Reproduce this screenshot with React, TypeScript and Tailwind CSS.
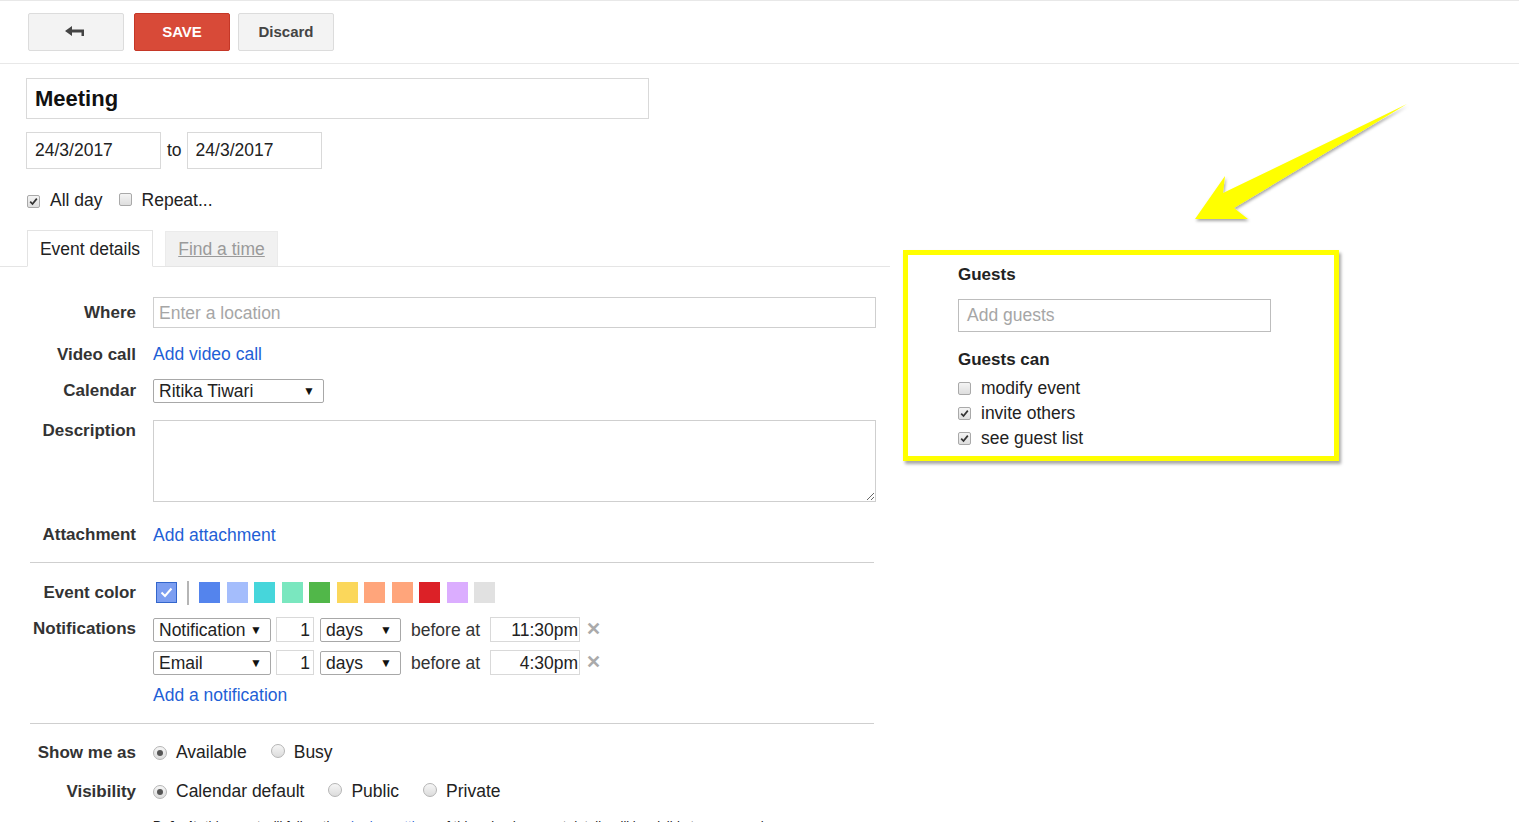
import React from 'react';

const font = { fontFamily: '"Liberation Sans", Arial, sans-serif' };

const Check = ({ checked }: { checked: boolean }) => (
  <span className="inline-flex h-[13px] w-[13px] shrink-0 items-center justify-center rounded-[2px] border border-[#a9a9a9] bg-gradient-to-b from-[#f4f4f4] to-[#dedede]">
    {checked && (
      <svg width="9" height="9" viewBox="0 0 9 9">
        <path d="M1.2 4.6 L3.5 7 L7.8 1.6" fill="none" stroke="#333" strokeWidth="1.7" />
      </svg>
    )}
  </span>
);

const Radio = ({ checked }: { checked: boolean }) => (
  <span className="inline-flex h-[14px] w-[14px] shrink-0 items-center justify-center rounded-full border border-[#b5b5b5] bg-gradient-to-b from-[#f6f6f6] to-[#dcdcdc]">
    {checked && <span className="h-[6px] w-[6px] rounded-full bg-[#555]" />}
  </span>
);

const Select = ({ label, width }: { label: string; width: string }) => (
  <div className={`flex h-[24px] items-center justify-between rounded-[2px] border border-[#a8a8a8] bg-white pl-[5px] pr-[8px] text-[17.5px] text-[#222] ${width}`}>
    <span>{label}</span>
    <span className="text-[12px] text-[#111]">▼</span>
  </div>
);

const Label = ({ children, top }: { children: React.ReactNode; top?: boolean }) => (
  <div className={`w-[136px] shrink-0 text-right text-[17px] font-bold text-[#333] ${top ? '-mt-[2px]' : ''}`}>{children}</div>
);

const colors = ['#5484ed', '#a4bdfc', '#46d6db', '#7ae7bf', '#51b749', '#fbd75b', '#ffa57b', '#ffa57b', '#dc2127', '#dbadff', '#e1e1e1'];

const notifications = [
  { type: 'Notification', time: '11:30pm' },
  { type: 'Email', time: '4:30pm' },
];

export default function App() {
  return (
    <div className="relative h-[822px] overflow-hidden bg-white text-[#222]" style={font}>
      {/* toolbar */}
      <div className="flex h-[64px] items-center border-b border-t border-[#e8e8e8] pl-[28px]">
        <button className="flex h-[38px] w-[96px] items-center justify-center rounded-[2px] border border-[#dcdcdc] bg-[#f3f3f3]">
          <svg width="22" height="12" viewBox="0 0 22 12">
            <path d="M0 5 L7 0 L7 3.5 L19 3.5 L19 10 L16.5 10 L16.5 6.5 L7 6.5 L7 10 Z" fill="#444" />
          </svg>
        </button>
        <button className="ml-[10px] h-[38px] w-[96px] rounded-[2px] border border-[#c53727] bg-[#d84a38] text-[15px] font-bold text-white">SAVE</button>
        <button className="ml-[8px] h-[38px] w-[96px] rounded-[2px] border border-[#dcdcdc] bg-[#f3f3f3] text-[15px] font-bold text-[#444]">Discard</button>
      </div>

      <div className="flex">
        {/* left column */}
        <div className="w-[890px] shrink-0">
          <div className="pl-[26px]">
            <div className="mt-[14px] flex h-[41px] w-[623px] items-center border border-[#d9d9d9] pl-[8px] text-[22px] font-bold text-[#111]">Meeting</div>
            <div className="mt-[13px] flex items-center">
              <div className="flex h-[37px] w-[135px] items-center border border-[#d9d9d9] pl-[8px] text-[17.5px]">24/3/2017</div>
              <span className="ml-[6px] mr-[5px] text-[17.5px]">to</span>
              <div className="flex h-[37px] w-[135px] items-center border border-[#d9d9d9] pl-[8px] text-[17.5px]">24/3/2017</div>
            </div>
            <div className="mt-[18px] flex items-center text-[17.5px]">
              <span className="ml-[1px]"><Check checked /></span>
              <span className="ml-[10px]">All day</span>
              <span className="ml-[16px]"><Check checked={false} /></span>
              <span className="ml-[10px]">Repeat...</span>
            </div>
          </div>

          {/* tabs */}
          <div className="mt-[17px] flex items-end border-b border-[#e5e5e5] pl-[27px]">
            <div className="-mb-px flex h-[37px] w-[126px] items-center justify-center border border-b-white border-[#e3e3e3] bg-white text-[17.5px] text-[#222]">Event details</div>
            <div className="ml-[12px] flex h-[35px] w-[113px] items-center justify-center border border-b-0 border-[#ebebeb] bg-[#f1f1f1] text-[17.5px] text-[#9a9a9a] underline">Find a time</div>
          </div>

          {/* form */}
          <div>
            <div className="mt-[30px] flex items-center">
              <Label>Where</Label>
              <div className="ml-[17px] flex h-[31px] w-[723px] items-center border border-[#cfcfcf] pl-[5px] text-[17.5px] text-[#a6a6a6]">Enter a location</div>
            </div>
            <div className="mt-[16px] flex h-[20px] items-center">
              <Label>Video call</Label>
              <span className="ml-[17px] text-[17.5px] text-[#1f5fd6]">Add video call</span>
            </div>
            <div className="mt-[14px] flex items-center">
              <Label>Calendar</Label>
              <div className="ml-[17px]"><Select label="Ritika Tiwari" width="w-[171px]" /></div>
            </div>
            <div className="mt-[16px] flex items-start">
              <Label top>Description</Label>
              <textarea className="ml-[17px] h-[82px] w-[723px] border border-[#cfcfcf] outline-none" />
            </div>
            <div className="mt-[23px] flex h-[20px] items-center">
              <Label>Attachment</Label>
              <span className="ml-[17px] text-[17.5px] text-[#1f5fd6]">Add attachment</span>
            </div>

            <div className="ml-[30px] mt-[17px] w-[844px] border-t border-[#cfcfcf]" />

            <div className="mt-[17px] flex items-center">
              <Label>Event color</Label>
              <div className="ml-[20px] flex items-center">
                <span className="flex h-[21px] w-[21px] items-center justify-center border border-[#3366cc] bg-[#7c9ef1]">
                  <svg width="13" height="11" viewBox="0 0 13 11">
                    <path d="M1.5 5.5 L5 9 L11.5 1.5" fill="none" stroke="#fff" strokeWidth="2" />
                  </svg>
                </span>
                <span className="ml-[10px] h-[24px] w-[2px] bg-[#b5b5b5]" />
                <div className="ml-[10px] flex gap-[6.5px]">
                  {colors.map((c, i) => (
                    <span key={i} className="h-[21px] w-[21px]" style={{ backgroundColor: c }} />
                  ))}
                </div>
              </div>
            </div>

            <div className="mt-[11px] flex items-start">
              <div className="flex h-[24px] items-center"><Label>Notifications</Label></div>
              <div className="ml-[17px] flex flex-col gap-[6px]">
                {notifications.map((n) => (
                  <div key={n.type} className="flex items-center text-[17.5px]">
                    <Select label={n.type} width="w-[118px]" />
                    <div className="ml-[5px] flex h-[25px] w-[38px] items-center justify-end border border-[#d9d9d9] pr-[3px]">1</div>
                    <div className="ml-[6px]"><Select label="days" width="w-[81px]" /></div>
                    <span className="ml-[10px] text-[#333]">before at</span>
                    <div className="ml-[10px] flex h-[25px] w-[90px] items-center justify-end border border-[#d9d9d9] pr-[1px]">{n.time}</div>
                    <span className="ml-[6px] text-[18px] font-bold text-[#aaa]">✕</span>
                  </div>
                ))}
                <span className="text-[17.5px] text-[#1f5fd6]">Add a notification</span>
              </div>
            </div>

            <div className="ml-[30px] mt-[14px] w-[844px] border-t border-[#cfcfcf]" />

            <div className="mt-[18px] flex h-[22px] items-center text-[17.5px]">
              <Label>Show me as</Label>
              <div className="ml-[17px] flex items-center">
                <Radio checked />
                <span className="ml-[9px]">Available</span>
                <span className="ml-[24px]"><Radio checked={false} /></span>
                <span className="ml-[9px]">Busy</span>
              </div>
            </div>
            <div className="mt-[17px] flex h-[22px] items-center text-[17.5px]">
              <Label>Visibility</Label>
              <div className="ml-[17px] flex items-center">
                <Radio checked />
                <span className="ml-[9px]">Calendar default</span>
                <span className="ml-[24px]"><Radio checked={false} /></span>
                <span className="ml-[9px]">Public</span>
                <span className="ml-[24px]"><Radio checked={false} /></span>
                <span className="ml-[9px]">Private</span>
              </div>
            </div>
            <div className="ml-[153px] mt-[15px] whitespace-nowrap text-[13px] leading-[16px] text-[#222]">
              <b>Default:</b> this event will follow the <span className="text-[#1f5fd6]">sharing settings</span> of this calendar; event details will be visible to anyone who can see
            </div>
          </div>
        </div>

        {/* guests column */}
        <div className="ml-[13px] mt-[186px] h-[211px] w-[436px] self-start border-[5px] border-[#ffff00] bg-white pl-[50px] shadow-[2px_3px_3px_rgba(0,0,0,0.35)]">
          <div className="mt-[7px] text-[17px] font-bold text-[#222]">Guests</div>
          <div className="mt-[11px] flex h-[33px] w-[313px] items-center border border-[#bdbdbd] pl-[8px] text-[17.5px] text-[#a6a6a6]">Add guests</div>
          <div className="mt-[15px] text-[17px] font-bold text-[#222]">Guests can</div>
          <div className="mt-[4px] flex flex-col text-[17.5px]">
            {[
              ['modify event', false],
              ['invite others', true],
              ['see guest list', true],
            ].map(([t, c]) => (
              <div key={t as string} className="flex h-[25px] items-center">
                <Check checked={c as boolean} />
                <span className="ml-[10px]">{t as string}</span>
              </div>
            ))}
          </div>
        </div>
      </div>

      {/* annotation arrow */}
      <svg className="pointer-events-none absolute left-0 top-0" width="1519" height="822">
        <defs>
          <filter id="sh" x="-20%" y="-20%" width="140%" height="140%">
            <feDropShadow dx="1" dy="2" stdDeviation="1.5" floodColor="#000" floodOpacity="0.35" />
          </filter>
        </defs>
        <polygon points="1407,104 1223,193 1225,176 1195,219 1248,219 1234,208" fill="#ffff00" filter="url(#sh)" />
      </svg>
    </div>
  );
}
